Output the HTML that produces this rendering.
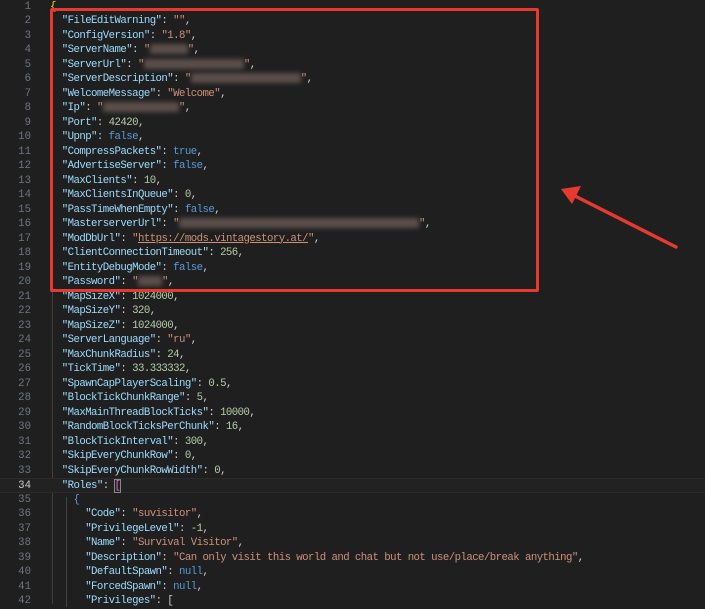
<!DOCTYPE html>
<html><head><meta charset="utf-8"><style>
html,body{margin:0;padding:0;width:705px;height:599px;overflow:hidden;background:#1f1f1f;}
.ed{position:absolute;left:0;top:1.5px;width:705px;height:599px;font-family:"Liberation Mono","DejaVu Sans Mono",monospace;font-size:10.7px;}
.l{position:absolute;left:0;height:14.5px;line-height:14.5px;white-space:pre;width:705px;}
.n{position:absolute;left:0;width:31px;text-align:right;color:#6e7681;}
.c{position:absolute;left:50px;color:#cccccc;letter-spacing:-0.55px;}
.k{color:#9cdcfe}.s{color:#ce9178}.d{color:#b5cea8}.b{color:#569cd6}.y{color:#ffd700}
.u{text-decoration:underline}
.bl{display:inline-block;height:10px;vertical-align:middle;background:#6a5a55;filter:blur(2.5px);opacity:.8}
.g{position:absolute;width:1px;background:#404040}
</style></head><body><div class="ed">
<div class="g" style="left:52px;top:12px;height:590px"></div>
<div class="g" style="left:66px;top:495px;height:110px"></div>
<div class="l" style="top:-2px"><span class="n">1</span><span class="c"><span class="y">{</span></span></div>
<div class="l" style="top:12.5px"><span class="n">2</span><span class="c">  <span class="k">"FileEditWarning"</span>: <span class="s">""</span>,</span></div>
<div class="l" style="top:27px"><span class="n">3</span><span class="c">  <span class="k">"ConfigVersion"</span>: <span class="s">"1.8"</span>,</span></div>
<div class="l" style="top:41.5px"><span class="n">4</span><span class="c">  <span class="k">"ServerName"</span>: <span class="s">"<span class="bl" style="width:38px"></span>"</span>,</span></div>
<div class="l" style="top:56px"><span class="n">5</span><span class="c">  <span class="k">"ServerUrl"</span>: <span class="s">"<span class="bl" style="width:100px"></span>"</span>,</span></div>
<div class="l" style="top:70.5px"><span class="n">6</span><span class="c">  <span class="k">"ServerDescription"</span>: <span class="s">"<span class="bl" style="width:110px"></span>"</span>,</span></div>
<div class="l" style="top:85px"><span class="n">7</span><span class="c">  <span class="k">"WelcomeMessage"</span>: <span class="s">"Welcome"</span>,</span></div>
<div class="l" style="top:99.5px"><span class="n">8</span><span class="c">  <span class="k">"Ip"</span>: <span class="s">"<span class="bl" style="width:76px"></span>"</span>,</span></div>
<div class="l" style="top:114px"><span class="n">9</span><span class="c">  <span class="k">"Port"</span>: <span class="d">42420</span>,</span></div>
<div class="l" style="top:128.5px"><span class="n">10</span><span class="c">  <span class="k">"Upnp"</span>: <span class="b">false</span>,</span></div>
<div class="l" style="top:143px"><span class="n">11</span><span class="c">  <span class="k">"CompressPackets"</span>: <span class="b">true</span>,</span></div>
<div class="l" style="top:157.5px"><span class="n">12</span><span class="c">  <span class="k">"AdvertiseServer"</span>: <span class="b">false</span>,</span></div>
<div class="l" style="top:172px"><span class="n">13</span><span class="c">  <span class="k">"MaxClients"</span>: <span class="d">10</span>,</span></div>
<div class="l" style="top:186.5px"><span class="n">14</span><span class="c">  <span class="k">"MaxClientsInQueue"</span>: <span class="d">0</span>,</span></div>
<div class="l" style="top:201px"><span class="n">15</span><span class="c">  <span class="k">"PassTimeWhenEmpty"</span>: <span class="b">false</span>,</span></div>
<div class="l" style="top:215.5px"><span class="n">16</span><span class="c">  <span class="k">"MasterserverUrl"</span>: <span class="s">"<span class="bl" style="width:240px"></span>"</span>,</span></div>
<div class="l" style="top:230px"><span class="n">17</span><span class="c">  <span class="k">"ModDbUrl"</span>: <span class="s">"<span class="u">https://mods.vintagestory.at/</span>"</span>,</span></div>
<div class="l" style="top:244.5px"><span class="n">18</span><span class="c">  <span class="k">"ClientConnectionTimeout"</span>: <span class="d">256</span>,</span></div>
<div class="l" style="top:259px"><span class="n">19</span><span class="c">  <span class="k">"EntityDebugMode"</span>: <span class="b">false</span>,</span></div>
<div class="l" style="top:273.5px"><span class="n">20</span><span class="c">  <span class="k">"Password"</span>: <span class="s">"<span class="bl" style="width:24px"></span>"</span>,</span></div>
<div class="l" style="top:288px"><span class="n">21</span><span class="c">  <span class="k">"MapSizeX"</span>: <span class="d">1024000</span>,</span></div>
<div class="l" style="top:302.5px"><span class="n">22</span><span class="c">  <span class="k">"MapSizeY"</span>: <span class="d">320</span>,</span></div>
<div class="l" style="top:317px"><span class="n">23</span><span class="c">  <span class="k">"MapSizeZ"</span>: <span class="d">1024000</span>,</span></div>
<div class="l" style="top:331.5px"><span class="n">24</span><span class="c">  <span class="k">"ServerLanguage"</span>: <span class="s">"ru"</span>,</span></div>
<div class="l" style="top:346px"><span class="n">25</span><span class="c">  <span class="k">"MaxChunkRadius"</span>: <span class="d">24</span>,</span></div>
<div class="l" style="top:360.5px"><span class="n">26</span><span class="c">  <span class="k">"TickTime"</span>: <span class="d">33.333332</span>,</span></div>
<div class="l" style="top:375px"><span class="n">27</span><span class="c">  <span class="k">"SpawnCapPlayerScaling"</span>: <span class="d">0.5</span>,</span></div>
<div class="l" style="top:389.5px"><span class="n">28</span><span class="c">  <span class="k">"BlockTickChunkRange"</span>: <span class="d">5</span>,</span></div>
<div class="l" style="top:404px"><span class="n">29</span><span class="c">  <span class="k">"MaxMainThreadBlockTicks"</span>: <span class="d">10000</span>,</span></div>
<div class="l" style="top:418.5px"><span class="n">30</span><span class="c">  <span class="k">"RandomBlockTicksPerChunk"</span>: <span class="d">16</span>,</span></div>
<div class="l" style="top:433px"><span class="n">31</span><span class="c">  <span class="k">"BlockTickInterval"</span>: <span class="d">300</span>,</span></div>
<div class="l" style="top:447.5px"><span class="n">32</span><span class="c">  <span class="k">"SkipEveryChunkRow"</span>: <span class="d">0</span>,</span></div>
<div class="l" style="top:462px"><span class="n">33</span><span class="c">  <span class="k">"SkipEveryChunkRowWidth"</span>: <span class="d">0</span>,</span></div>
<div class="l" style="top:476.5px;background:#222;border-top:1px solid #2a2a2a;border-bottom:1px solid #2a2a2a;height:12.5px"><span class="n" style="color:#ccc">34</span><span class="c">  <span class="k">"Roles"</span>: <span style="color:#da70d6;outline:1px solid #888">[</span></span></div>
<div class="l" style="top:491px"><span class="n">35</span><span class="c">    <span style="color:#569cd6">{</span></span></div>
<div class="l" style="top:505.5px"><span class="n">36</span><span class="c">      <span class="k">"Code"</span>: <span class="s">"suvisitor"</span>,</span></div>
<div class="l" style="top:520px"><span class="n">37</span><span class="c">      <span class="k">"PrivilegeLevel"</span>: <span class="d">-1</span>,</span></div>
<div class="l" style="top:534.5px"><span class="n">38</span><span class="c">      <span class="k">"Name"</span>: <span class="s">"Survival Visitor"</span>,</span></div>
<div class="l" style="top:549px"><span class="n">39</span><span class="c">      <span class="k">"Description"</span>: <span class="s">"Can only visit this world and chat but not use/place/break anything"</span>,</span></div>
<div class="l" style="top:563.5px"><span class="n">40</span><span class="c">      <span class="k">"DefaultSpawn"</span>: <span class="b">null</span>,</span></div>
<div class="l" style="top:578px"><span class="n">41</span><span class="c">      <span class="k">"ForcedSpawn"</span>: <span class="b">null</span>,</span></div>
<div class="l" style="top:592.5px"><span class="n">42</span><span class="c">      <span class="k">"Privileges"</span>: [</span></div>
</div>
<div style="position:absolute;left:50px;top:8px;width:483px;height:278px;border:3px solid #e8392f;border-radius:2px"></div>
<svg style="position:absolute;left:0;top:0" width="705" height="599"><line x1="676" y1="247" x2="575" y2="196" stroke="#e8392f" stroke-width="3.5" stroke-linecap="round"/><polygon points="561,189 581,186 572,204" fill="#e8392f"/></svg>
</body></html>
